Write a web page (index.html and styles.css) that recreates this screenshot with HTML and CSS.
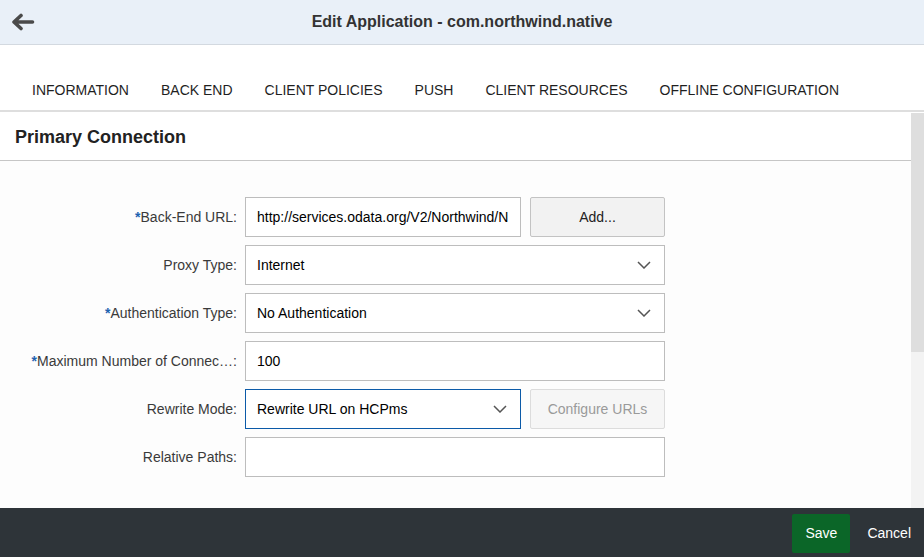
FILE: index.html
```html
<!DOCTYPE html>
<html lang="en">
<head>
<meta charset="utf-8">
<title>Edit Application</title>
<link rel="stylesheet" href="styles.css">
</head>
<body>
<div class="app">
  <header class="topbar">
    <button class="back" aria-label="Back">
      <svg width="24" height="18" viewBox="0 0 24 18"><path d="M10 2.5 L3 9 L10 15.5 M3.5 9 H21.5" fill="none" stroke="#4a4a4a" stroke-width="3.6" stroke-linecap="round" stroke-linejoin="round"/></svg>
    </button>
    <h1 class="title">Edit Application - com.northwind.native</h1>
    <div></div>
  </header>
  <nav class="tabs">
    <a class="tab">INFORMATION</a>
    <a class="tab">BACK END</a>
    <a class="tab">CLIENT POLICIES</a>
    <a class="tab">PUSH</a>
    <a class="tab">CLIENT RESOURCES</a>
    <a class="tab">OFFLINE CONFIGURATION</a>
  </nav>
  <div class="main">
    <div class="content">
      <div class="section-head"><h2 class="section-title">Primary Connection</h2></div>
      <div class="form">
        <div class="label"><span class="req">*</span>Back-End URL:</div>
        <div class="field split">
          <div class="input">http://services.odata.org/V2/Northwind/N</div>
          <button class="btn">Add...</button>
        </div>

        <div class="label">Proxy Type:</div>
        <div class="field">
          <div class="input select">Internet<svg class="chev" width="14" height="8" viewBox="0 0 14 8"><path d="M1 1 L7 7 L13 1" fill="none" stroke="#555" stroke-width="1.5"/></svg></div>
        </div>

        <div class="label"><span class="req">*</span>Authentication Type:</div>
        <div class="field">
          <div class="input select">No Authentication<svg class="chev" width="14" height="8" viewBox="0 0 14 8"><path d="M1 1 L7 7 L13 1" fill="none" stroke="#555" stroke-width="1.5"/></svg></div>
        </div>

        <div class="label"><span class="req">*</span>Maximum Number of Connec…:</div>
        <div class="field">
          <div class="input">100</div>
        </div>

        <div class="label">Rewrite Mode:</div>
        <div class="field split">
          <div class="input select focused">Rewrite URL on HCPms<svg class="chev" width="14" height="8" viewBox="0 0 14 8"><path d="M1 1 L7 7 L13 1" fill="none" stroke="#555" stroke-width="1.5"/></svg></div>
          <button class="btn disabled">Configure URLs</button>
        </div>

        <div class="label">Relative Paths:</div>
        <div class="field">
          <div class="input"></div>
        </div>
      </div>
    </div>
    <div class="scrollbar"><div class="thumb"></div></div>
  </div>
  <footer class="footer">
    <button class="save">Save</button>
    <button class="cancel">Cancel</button>
  </footer>
</div>
</body>
</html>
```

FILE: styles.css
```css
* { box-sizing: border-box; }
html, body { margin: 0; padding: 0; }
body {
  font-family: "Liberation Sans", Arial, sans-serif;
  background: #fff;
  color: #333;
}
.app {
  width: 924px;
  height: 557px;
  display: flex;
  flex-direction: column;
  overflow: hidden;
}
.topbar {
  height: 45px;
  flex: none;
  background: #e9f0f8;
  border-bottom: 1px solid #d3d9e0;
  display: grid;
  grid-template-columns: 1fr auto 1fr;
  align-items: center;
}
.back {
  justify-self: start;
  margin-left: 11px;
  padding: 0;
  border: 0;
  background: none;
  width: 24px;
  height: 18px;
  display: flex;
}
.title {
  margin: 0;
  font-size: 16px;
  font-weight: bold;
  color: #333;
}
.tabs {
  height: 67px;
  flex: none;
  display: flex;
  align-items: flex-end;
  padding-left: 16px;
  border-bottom: 2px solid #dedede;
}
.tab {
  font-size: 14px;
  color: #1f1f1f;
  line-height: 40px;
  padding: 0 16px;
}
.main {
  flex: 1;
  display: flex;
  min-height: 0;
}
.content {
  flex: 1;
  background: #fdfdfd;
}
.section-head {
  height: 49px;
  border-bottom: 1px solid #c6c6c6;
  display: flex;
  align-items: center;
  padding-left: 15px;
  padding-top: 2px;
  background: #fff;
}
.section-title {
  margin: 0;
  font-size: 18px;
  font-weight: bold;
  color: #222;
}
.form {
  display: grid;
  grid-template-columns: 237px 420px;
  grid-auto-rows: 40px;
  column-gap: 8px;
  row-gap: 8px;
  padding-top: 36px;
}
.label {
  font-size: 14px;
  color: #3a3a3a;
  text-align: right;
  align-self: center;
  white-space: nowrap;
}
.req {
  color: #1f63b0;
  font-weight: bold;
}
.field {
  display: flex;
}
.field.split {
  gap: 9px;
}
.input {
  flex: 1;
  height: 40px;
  border: 1px solid #bdbdbd;
  background: #fff;
  font-size: 14px;
  color: #000;
  padding: 0 11px;
  display: flex;
  align-items: center;
  justify-content: space-between;
  white-space: nowrap;
  overflow: hidden;
}
.split .input {
  flex: none;
  width: 276px;
}
.input.focused {
  border-color: #0b5aa8;
}
.chev {
  flex: none;
  margin-right: 2px;
}
.btn {
  flex: 1;
  height: 40px;
  font-family: inherit;
  font-size: 14px;
  color: #222;
  background: #f2f2f2;
  border: 1px solid #c3c3c3;
  border-radius: 2px;
}
.btn.disabled {
  color: #9a9a9a;
  background: #f6f6f6;
  border-color: #dcdcdc;
}
.scrollbar {
  width: 13px;
  flex: none;
  margin-top: 1px;
  background: #f3f3f3;
}
.thumb {
  height: 239px;
  background: #dedede;
}
.footer {
  height: 49px;
  flex: none;
  background: #2e3439;
  display: flex;
  justify-content: flex-end;
  align-items: center;
  gap: 4px;
}
.save {
  width: 58px;
  height: 39px;
  margin-top: 1px;
  background: #0b6628;
  color: #fff;
  border: 0;
  border-radius: 2px;
  font-family: inherit;
  font-size: 14px;
}
.cancel {
  height: 39px;
  margin-top: 1px;
  padding: 0 13px;
  background: none;
  border: 0;
  color: #fff;
  font-family: inherit;
  font-size: 14px;
}
```
